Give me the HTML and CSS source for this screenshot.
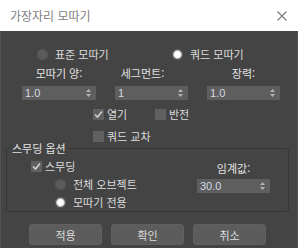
FILE: index.html
```html
<!DOCTYPE html>
<html lang="ko">
<head>
  <meta charset="UTF-8" />
  <title>가장자리 모따기</title>
  <meta name="viewport" content="width=device-width, initial-scale=1.0" />
  <link rel="stylesheet" href="styles.css">
</head>
<body>

<div class="dialog">
  <!-- Title bar -->
  <div class="titlebar">
    <span>가장자리 모따기</span>
    <svg class="close" width="10" height="10" viewBox="0 0 10 10"><path d="M0.5 0.5 L9.5 9.5 M9.5 0.5 L0.5 9.5" stroke="#7a7a7a" stroke-width="1.1" fill="none"/></svg>
  </div>

  <div class="content">
    <!-- Mode -->
    <div class="modes">
      <div class="radio"><i class="dot"></i>표준 모따기</div>
      <div class="radio on"><i class="dot"></i>쿼드 모따기</div>
    </div>

    <!-- Amount / segments / tension -->
    <div class="fields">
      <div class="field">
        <span class="cap">모따기 양:</span>
        <div class="spin"><span>1.0</span><svg width="5" height="10" viewBox="0 0 5 10"><path d="M0 4 L2.5 1 L5 4 Z M0 6 L2.5 9 L5 6 Z" fill="#b4b4b4"/></svg></div>
      </div>
      <div class="field">
        <span class="cap seg">세그먼트:</span>
        <div class="spin"><span>1</span><svg width="5" height="10" viewBox="0 0 5 10"><path d="M0 4 L2.5 1 L5 4 Z M0 6 L2.5 9 L5 6 Z" fill="#b4b4b4"/></svg></div>
      </div>
      <div class="field">
        <span class="cap">장력:</span>
        <div class="spin"><span>1.0</span><svg width="5" height="10" viewBox="0 0 5 10"><path d="M0 4 L2.5 1 L5 4 Z M0 6 L2.5 9 L5 6 Z" fill="#b4b4b4"/></svg></div>
      </div>
    </div>

    <!-- Options -->
    <div class="checks">
      <div class="check on"><i class="box"><svg width="11" height="11" viewBox="0 0 11 11"><path d="M2 5.5 L4.5 8 L9 2.5" stroke="#cfcfcf" stroke-width="1.6" fill="none"/></svg></i>열기</div>
      <div class="check"><i class="box"></i>반전</div>
    </div>
    <div class="checks second">
      <div class="check"><i class="box"></i>쿼드 교차</div>
    </div>

    <!-- Smoothing -->
    <fieldset class="group">
      <legend>스무딩 옵션</legend>
      <div class="group-grid">
        <div class="group-left">
          <div class="check on"><i class="box"><svg width="11" height="11" viewBox="0 0 11 11"><path d="M2 5.5 L4.5 8 L9 2.5" stroke="#cfcfcf" stroke-width="1.6" fill="none"/></svg></i>스무딩</div>
          <div class="radio sub"><i class="dot"></i>전체 오브젝트</div>
          <div class="radio sub on"><i class="dot"></i>모따기 전용</div>
        </div>
        <div class="group-right">
          <span class="cap">임계값:</span>
          <div class="spin"><span>30.0</span><svg width="5" height="10" viewBox="0 0 5 10"><path d="M0 4 L2.5 1 L5 4 Z M0 6 L2.5 9 L5 6 Z" fill="#b4b4b4"/></svg></div>
        </div>
      </div>
    </fieldset>

    <!-- Buttons -->
    <div class="buttons">
      <button>적용</button>
      <button>확인</button>
      <button>취소</button>
    </div>
  </div>
</div>

</body>
</html>
```

FILE: styles.css
```css
body { margin:0; background:#444; font-family:"Noto Sans CJK KR", sans-serif; color:#dcdcdc; }
.dialog { width:298px; height:248px; overflow:hidden; }

.titlebar { height:31px; background:#fff; display:flex; align-items:center; justify-content:space-between; padding:0 11px 0 10px; box-sizing:border-box; font-size:12px; color:#7e7e7e; }
.titlebar span { line-height:14px; margin-top:1px; }

.content { background:#444; height:217px; border-left:1px solid #535353; border-right:1px solid #535353; box-sizing:border-box; padding-top:15px; font-size:11px; }

.radio { display:flex; align-items:center; gap:7px; line-height:16px; }
.radio .dot { display:block; width:11px; height:11px; border-radius:50%; background:#5b5b5b; box-shadow:inset 0 0 0 1px #545454; }
.radio.on .dot { background:radial-gradient(circle, #fff 0 2.5px, #ececec 3.2px, #b0b0b0 4.3px, #6a6a6a 5.5px); }

.modes { display:grid; grid-template-columns:135px auto; padding-left:36px; }

.fields { display:grid; grid-template-columns:74px 73px 73px; column-gap:19px; padding-left:21px; margin-top:4px; }
.field { display:flex; flex-direction:column; align-items:center; }
.cap { line-height:14px; color:#e2e2e2; }
.cap.seg { margin-right:18px; }

.spin { width:100%; height:14px; background:#5e5e5e; display:flex; align-items:center; justify-content:space-between; padding:0 5px 0 3px; box-sizing:border-box; margin-top:6px; }
.spin span { font-family:"Liberation Sans", sans-serif; font-size:11px; color:#d2dae4; line-height:14px; }
.spin svg { display:block; }

.checks { display:grid; grid-template-columns:62px auto; padding-left:92px; margin-top:8px; }
.checks.second { margin-top:10px; }
.check { display:flex; align-items:center; gap:3px; line-height:12px; }
.check .box { display:block; width:11px; height:11px; background:#606060; }
.check .box svg { display:block; }

.group { margin:0 8px 0 5px; padding:5px 0 2px; border:1px solid #363636; border-radius:3px; }
.group legend { margin-left:3px; padding:0 2px; line-height:12px; color:#e2e2e2; }
.group-grid { display:grid; grid-template-columns:1fr 73px; padding:0 18px 0 24px; }
.group-left { display:flex; flex-direction:column; gap:4px; }
.group-left .check { line-height:14px; }
.group-left .radio { line-height:14px; padding-left:24px; }
.group-right { display:flex; flex-direction:column; align-items:center; padding-top:2px; }
.group-right .spin { margin-top:4px; }

.buttons { display:flex; gap:9px; padding-left:28px; margin-top:12px; }
.buttons button { width:73px; height:21px; background:#5c5c5c; border:1px solid #606060; border-radius:3px; color:#dcdcdc; font-family:"Noto Sans CJK KR", sans-serif; font-size:11px; padding:0; }
```
